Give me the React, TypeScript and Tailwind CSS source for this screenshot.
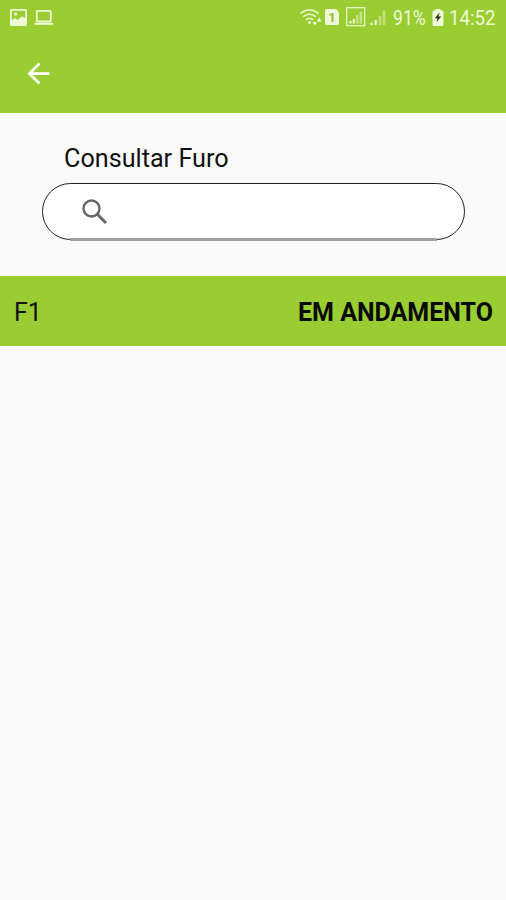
import { MdArrowBack } from "react-icons/md";

function StatusBar() {
  return (
    <div className="flex h-9 items-center text-[#eff8d8]">
      {/* ── Notifications ─────────────────────── */}
      <svg width="17" height="17" viewBox="0 0 17 17" className="-mt-0.5 ml-2.5 shrink-0">
        <path
          fill="currentColor"
          fillRule="evenodd"
          d="M1.500 0h14A1.500 1.500 0 0 1 17 1.500v14a1.500 1.500 0 0 1-1.500 1.500h-14A1.500 1.500 0 0 1 0 15.500v-14A1.500 1.500 0 0 1 1.500 0ZM1.800 1.800v9.200l3.200-2 2.500 2 4.500-3.500 3.200 1.500V1.800ZM4 5a1.600 1.600 0 1 0 3.200 0a1.600 1.600 0 1 0-3.200 0Z"
        />
      </svg>
      <svg width="20" height="17" viewBox="0 0 20 17" className="-mt-0.5 ml-[7px] shrink-0" fill="none" stroke="currentColor">
        <rect x="2.800" y="1.800" width="14" height="10.700" rx="1" strokeWidth="1.800" />
        <path d="M0.500 14.800h18.500" strokeWidth="2" />
      </svg>

      {/* ── System icons ─────────────────────── */}
      <div className="ml-auto flex items-center">
        <svg width="24" height="20" viewBox="0 0 24 20" className="mt-[-2px]" fill="none" stroke="currentColor" strokeWidth="1.600">
          <path d="M0.500 6.800a12.500 12.500 0 0 1 18 0M3.300 9.800a8.800 8.800 0 0 1 12.400 0M6 12.800a5 5 0 0 1 7 0" />
          <circle cx="9.500" cy="15.500" r="1.400" fill="currentColor" stroke="none" />
          <path fill="currentColor" stroke="none" d="M12.500 15h4.500l-2.250 3.500ZM17 14.500l2.250-4 2.250 4Z" />
        </svg>
        <span className="-mt-0.5 ml-px flex h-4 w-3.5 items-center justify-center rounded-[2px] rounded-tr-[5px] bg-[#eff8d8] font-[Roboto] text-[13px] leading-none font-bold text-[#8cbd2c]">
          1
        </span>
        <svg width="20" height="20" viewBox="0 0 20 20" className="-mt-0.5 ml-[7px]" fill="none" stroke="currentColor">
          <rect x="0.700" y="0.700" width="18" height="18" strokeWidth="1.200" />
          <path d="M4.500 16.500v-2.500M7.800 16.500v-4.500" strokeWidth="2" />
          <path d="M11.300 16.500v-8.500M14.800 16.500v-12" strokeWidth="2.400" opacity="0.500" />
        </svg>
        <svg width="16" height="16" viewBox="0 0 16 16" className="ml-1" fill="none" stroke="currentColor">
          <path d="M1.500 15v-2.500M5.700 15v-5" strokeWidth="2.200" />
          <path d="M10 15v-9M14 15v-14" strokeWidth="2.600" opacity="0.450" />
        </svg>
        <span className="ml-[7px] w-[33px] font-[Roboto] text-[21px] leading-none">
          <span className="inline-block origin-left scale-x-[0.840]">91%</span>
        </span>
        <svg width="12" height="17" viewBox="0 0 12 17" className="-mt-0.5 ml-1.5">
          <path fill="currentColor" d="M3.500 0h5v1.500h1.500a1.500 1.500 0 0 1 1.500 1.500v12.500a1.500 1.500 0 0 1-1.500 1.500h-8a1.500 1.500 0 0 1-1.500-1.500v-12.500a1.500 1.500 0 0 1 1.500-1.500h1.500Z" />
          <path fill="#26330c" d="M7.500 3.500 2.800 9.300h2.700l-1 4 4.700-5.800h-2.700Z" />
        </svg>
        <span className="ml-[5px] w-[57px] font-[Roboto] text-[21px] leading-none">
          <span className="inline-block origin-left scale-x-[0.890]">14:52</span>
        </span>
      </div>
    </div>
  );
}

function SearchIcon() {
  return (
    <svg width="26" height="26" viewBox="0 0 26 26" fill="none" stroke="currentColor">
      <circle cx="9.500" cy="9.500" r="8" strokeWidth="2.400" />
      <path d="M15.300 15.300l8.700 8.700" strokeWidth="3" />
    </svg>
  );
}

export default function App() {
  return (
    <div className="min-h-screen bg-[#fafafa] font-[Roboto,sans-serif] text-[#111]">
      <header className="h-[113px] bg-[#9acd32]">
        <StatusBar />
        <button type="button" aria-label="Voltar" className="mt-[21px] ml-[22px] block text-white">
          <MdArrowBack size={33} />
        </button>
      </header>

      <section className="h-[163px] px-[42px] pt-[31px]">
        <h1 className="ml-[22px] h-[39px] text-[25.200px] leading-[30px]">Consultar Furo</h1>
        <div className="relative flex h-[57px] w-[423px] items-center rounded-full border-[1.500px] border-[#222] bg-white pl-[39px] text-[#666]">
          <SearchIcon />
          {/* Soft underline along the flat part of the pill */}
          <div className="absolute right-[27px] -bottom-[2px] left-[27px] h-[3px] bg-[#a0a0a0]" />
        </div>
      </section>

      <div className="flex h-[70px] items-center justify-between bg-[#9acd32] pt-[3px] pr-[13px] pl-3.5 text-[25px]">
        <span>F1</span>
        <span className="font-bold text-[#0a0a0a]">EM ANDAMENTO</span>
      </div>
    </div>
  );
}
